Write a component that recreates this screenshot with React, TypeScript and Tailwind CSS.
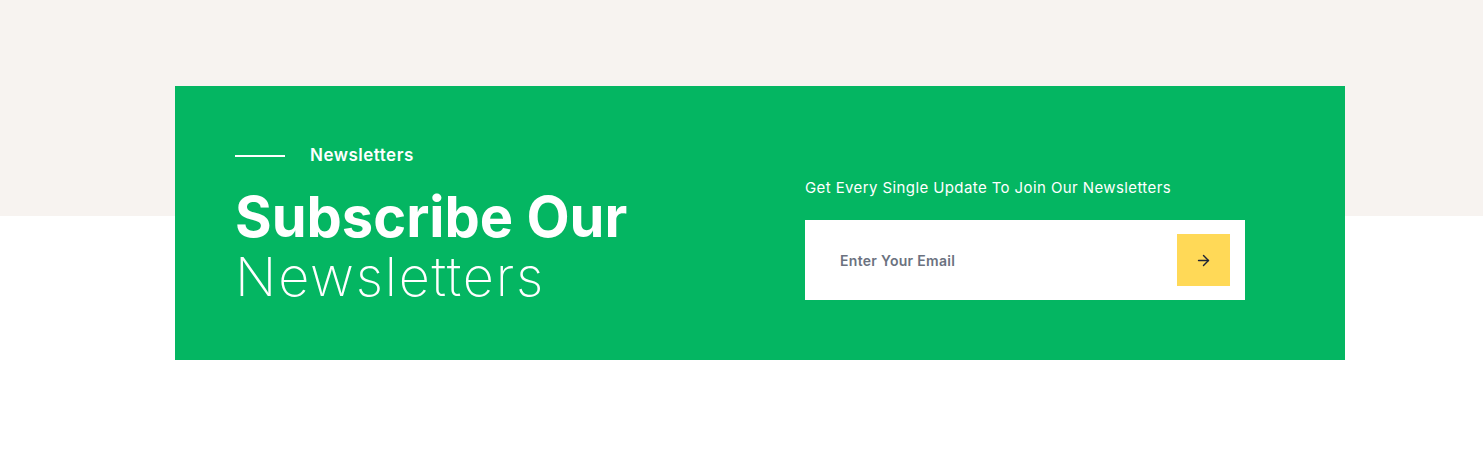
import { ArrowRight } from "lucide-react";

const font = { fontFamily: "Inter, 'Noto Sans', sans-serif" };

export default function App() {
    return (
        <div
            className="w-full h-[467px] pt-[86px] bg-[linear-gradient(to_bottom,#f7f3f0_216px,#ffffff_216px)]"
            style={font}
        >
            <div className="ml-[175px] w-[1170px] h-[274px] bg-[#04b662] flex px-[60px]">
                {/* left */}
                <div className="w-[570px] pt-[58px]">
                    <div className="flex items-center h-6 gap-x-[25px]">
                        <div className="w-[50px] h-[2px] bg-white" />
                        <span className="text-white text-[17px] font-semibold tracking-[0.5px]">Newsletters</span>
                    </div>
                    <h2 className="mt-[20px] text-white">
                        <span className="block text-[56px] leading-[59px] font-bold">Subscribe Our</span>
                        <span className="block text-[54px] leading-[59px] font-extralight tracking-[1.8px]">Newsletters</span>
                    </h2>
                </div>

                {/* right */}
                <div className="w-[440px] pt-[90px]">
                    <p className="text-white text-[15px] leading-6 tracking-[0.4px]">
                        Get Every Single Update To Join Our Newsletters
                    </p>
                    <form
                        className="mt-[20px] h-[80px] bg-white flex items-center pl-[35px] pr-[15px]"
                        onSubmit={(e) => e.preventDefault()}
                    >
                        <input
                            type="email"
                            placeholder="Enter Your Email"
                            className="flex-1 h-full outline-none text-[14px] font-semibold tracking-[0.3px] text-gray-700 placeholder:text-[#6b7280]"
                        />
                        <button
                            type="submit"
                            className="w-[53px] h-[52px] bg-[#ffd957] flex items-center justify-center"
                        >
                            <ArrowRight className="size-[17px] text-[#1f2436]" strokeWidth={2} />
                        </button>
                    </form>
                </div>
            </div>
        </div>
    );
}
